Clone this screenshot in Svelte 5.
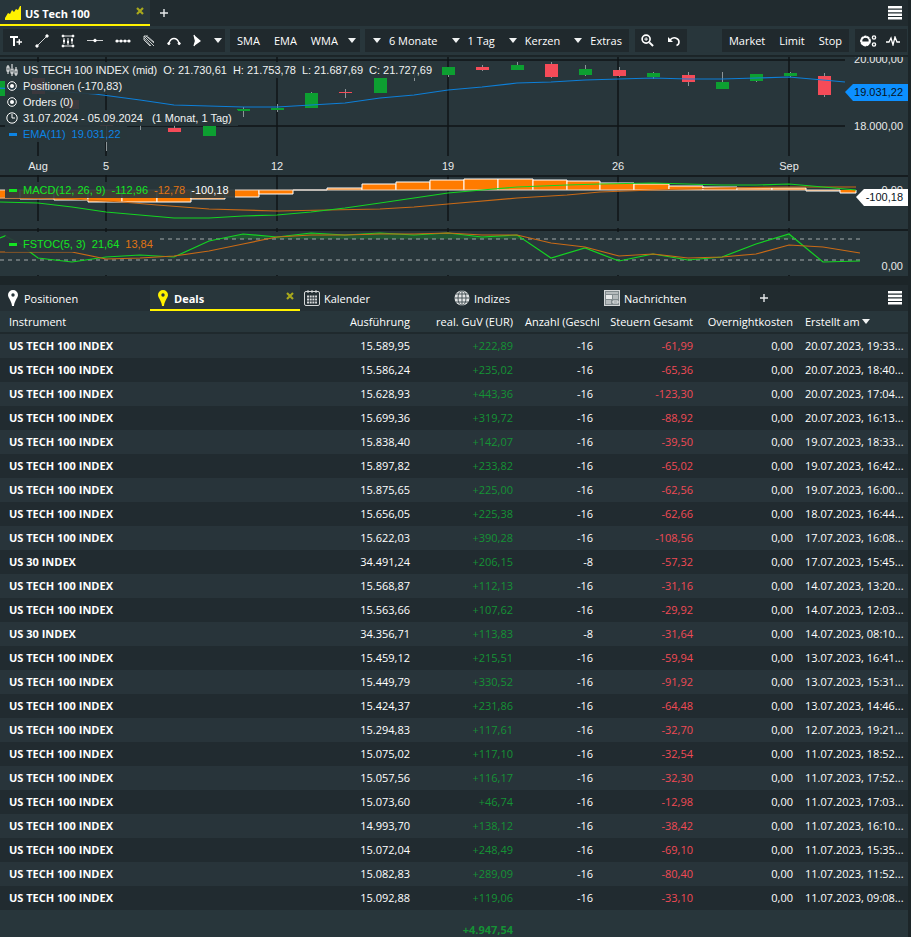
<script lang="ts">
  type Deal = [string, string, string, string, string, string];

  const us = 'US TECH 100 INDEX';
  const dow = 'US 30 INDEX';

  // instrument, price, profit, amount, tax, created
  const deals: Deal[] = [
    [us, '15.589,95', '+222,89', '-16', '-61,99', '20.07.2023, 19:33...'],
    [us, '15.586,24', '+235,02', '-16', '-65,36', '20.07.2023, 18:40...'],
    [us, '15.628,93', '+443,36', '-16', '-123,30', '20.07.2023, 17:04...'],
    [us, '15.699,36', '+319,72', '-16', '-88,92', '20.07.2023, 16:13...'],
    [us, '15.838,40', '+142,07', '-16', '-39,50', '19.07.2023, 18:33...'],
    [us, '15.897,82', '+233,82', '-16', '-65,02', '19.07.2023, 16:42...'],
    [us, '15.875,65', '+225,00', '-16', '-62,56', '19.07.2023, 16:00...'],
    [us, '15.656,05', '+225,38', '-16', '-62,66', '18.07.2023, 16:44...'],
    [us, '15.622,03', '+390,28', '-16', '-108,56', '17.07.2023, 16:08...'],
    [dow, '34.491,24', '+206,15', '-8', '-57,32', '17.07.2023, 15:45...'],
    [us, '15.568,87', '+112,13', '-16', '-31,16', '14.07.2023, 13:20...'],
    [us, '15.563,66', '+107,62', '-16', '-29,92', '14.07.2023, 12:03...'],
    [dow, '34.356,71', '+113,83', '-8', '-31,64', '14.07.2023, 08:10...'],
    [us, '15.459,12', '+215,51', '-16', '-59,94', '13.07.2023, 16:41...'],
    [us, '15.449,79', '+330,52', '-16', '-91,92', '13.07.2023, 15:31...'],
    [us, '15.424,37', '+231,86', '-16', '-64,48', '13.07.2023, 14:46...'],
    [us, '15.294,83', '+117,61', '-16', '-32,70', '12.07.2023, 19:21...'],
    [us, '15.075,02', '+117,10', '-16', '-32,54', '11.07.2023, 18:52...'],
    [us, '15.057,56', '+116,17', '-16', '-32,30', '11.07.2023, 17:52...'],
    [us, '15.073,60', '+46,74', '-16', '-12,98', '11.07.2023, 17:03...'],
    [us, '14.993,70', '+138,12', '-16', '-38,42', '11.07.2023, 16:10...'],
    [us, '15.072,04', '+248,49', '-16', '-69,10', '11.07.2023, 15:35...'],
    [us, '15.082,83', '+289,09', '-16', '-80,40', '11.07.2023, 11:52...'],
    [us, '15.092,88', '+119,06', '-16', '-33,10', '11.07.2023, 09:08...']
  ];

  const days = [
    { x: 38, label: 'Aug' },
    { x: 106, label: '5' },
    { x: 277, label: '12' },
    { x: 448, label: '19' },
    { x: 618, label: '26' },
    { x: 789, label: 'Sep' }
  ];

  // x, body top, body bottom, wick top, wick bottom, rising
  const candles: [number, number, number, number, number, boolean][] = [
    [-2, 81, 96, 79, 96, true],
    [38, 78, 94, 78, 94, false],
    [72, 100, 109, 100, 109, false],
    [106, 125, 126, 125, 151, false],
    [174, 128, 132, 125, 132, false],
    [209, 126, 136, 126, 136, true],
    [243, 109, 111, 107, 117, true],
    [277, 108, 110, 104, 112, true],
    [311, 93, 108, 92, 108, true],
    [345, 92, 93, 89, 98, false],
    [380, 78, 93, 78, 93, true],
    [448, 67, 75, 67, 77, true],
    [482, 67, 70, 65, 71, false],
    [517, 65, 70, 62, 70, true],
    [551, 64, 77, 62, 78, false],
    [585, 69, 75, 65, 76, true],
    [619, 70, 76, 67, 77, false],
    [653, 73, 77, 72, 79, true],
    [688, 75, 82, 72, 86, false],
    [722, 82, 89, 72, 89, true],
    [756, 74, 81, 74, 82, true],
    [790, 73, 76, 72, 77, true],
    [824, 76, 95, 73, 97, false]
  ];

  // x, width, value edge; the zero line is at 190
  const bars: [number, number, number][] = [
    [-14, 34, 198], [20, 34, 199], [54, 34, 200], [88, 34, 202], [122, 35, 202],
    [157, 34, 202], [191, 34, 199], [225, 34, 197], [259, 34, 194], [293, 34, 190],
    [327, 35, 188], [362, 34, 184], [396, 34, 182], [430, 34, 180], [464, 34, 179],
    [498, 35, 179], [533, 34, 180], [567, 33, 181], [600, 34, 183], [634, 35, 184],
    [669, 34, 186], [703, 34, 187], [737, 35, 188], [772, 34, 188], [806, 34, 191],
    [840, 16, 193]
  ];

  const ema = '-2,88 38,90 95,94 140,100 174,105 243,107 277,107 311,105 345,103 380,98 414,95 448,90 482,87 517,83 551,82 585,80 619,79 653,78 688,79 722,79 756,78 789,77 823,80 845,82';
  const macd = '0,202 38,203 72,207 106,212 140,215 174,218 209,218 243,216 277,215 311,212 345,208 380,203 414,198 448,193 482,190 517,187 567,185 600,184 653,183 721,185 756,185 789,184 823,187 856,190';
  const signal = '0,198 72,199 122,202 157,205 209,209 277,211 327,210 380,209 414,207 448,204 517,198 567,195 600,192 653,190 721,188 789,187 856,187';
  const fast = '0,238 5,236 24,246 30,252 38,258 72,262 106,257 140,255 174,257 209,241 243,234 277,237 311,233 345,235 380,233 414,235 448,233 482,237 517,235 551,258 585,248 619,261 653,254 688,260 722,257 756,244 789,234 823,262 860,261';
  const slow = '0,252 72,252 106,259 140,258 174,256 209,251 243,244 277,237 311,235 345,235 380,234 414,234 448,233 482,235 517,235 551,243 585,247 619,256 653,254 688,258 722,257 756,254 789,245 823,247 860,253';
</script>

{#snippet burger()}
  <svg width="14" height="14" viewBox="0 0 14 14" fill="#fff"><path d="M0 0h14v2.500H0zM0 3.700h14v2.500H0zM0 7.400h14v2.500H0zM0 11.100h14v2.500H0z" /></svg>
{/snippet}

{#snippet caret()}
  <svg class="caret" width="8" height="5" viewBox="0 0 8 5"><path d="M0 0h8L4 5z" fill="#f0f2f2" /></svg>
{/snippet}

{#snippet cross()}
  <svg width="8" height="8" viewBox="0 0 8 8"><path d="M1 1l6 6M7 1L1 7" stroke="#a8a81c" stroke-width="2.200" /></svg>
{/snippet}

{#snippet plus()}
  <svg width="8" height="8" viewBox="0 0 8 8"><path d="M4 0v8M0 4h8" stroke="#e6e9ea" stroke-width="1.400" /></svg>
{/snippet}

{#snippet pin(color: string)}
  <svg width="10" height="16" viewBox="0 0 10 16"><path d="M5 0a5 5 0 0 0-5 5c0 3 3.600 5.500 4 11h2c.4-5.500 4-8 4-11a5 5 0 0 0-5-5z" fill={color} /><circle cx="5" cy="5" r="1.700" fill="#28363b" /></svg>
{/snippet}

<div class="app">
  <nav class="tabs">
    <button class="tab active">
      <svg class="logo" width="16" height="14" viewBox="0 0 16 14"><path d="M0 14v-2l3-5 2 1 2-4 2 2 2-3 2 1 2-4h1v14z" fill="#fff200" /></svg>
      <span class="name">US Tech 100</span>
      {@render cross()}
    </button>
    <button class="add" aria-label="Neuer Tab">{@render plus()}</button>
    <button class="menu" aria-label="Menü">{@render burger()}</button>
  </nav>

  <div class="toolbar">
    <div class="group tools">
      <button aria-label="Text"><svg width="14" height="14" viewBox="0 0 14 14" fill="none" stroke="#fff"><path d="M1 3h8M5 3v9" stroke-width="2" /><path d="M7.500 8h5.500M10.300 5.200v5.600" stroke-width="1.400" /></svg></button>
      <button aria-label="Linie"><svg width="14" height="14" viewBox="0 0 14 14" fill="#fff" stroke="#fff"><path d="M2 12L12 2" stroke-width=".8" /><circle cx="2" cy="12" r="1.200" /><circle cx="12" cy="2" r="1.200" /></svg></button>
      <button aria-label="Bereich"><svg width="14" height="14" viewBox="0 0 14 14" fill="#fff" stroke="#fff" stroke-width=".9"><path d="M1 2h12M1 12h12M3 4v6M7 4v7M11 4v6" /><circle cx="2" cy="2" r="1" /><circle cx="12" cy="2" r="1" /><circle cx="2" cy="12" r="1" /><circle cx="12" cy="12" r="1" /><path d="M2.500 6h1v2h-1zM6.500 7h1v2h-1zM10.500 5h1v2h-1z" /></svg></button>
      <button aria-label="Horizontale"><svg width="16" height="14" viewBox="0 0 16 14" fill="#fff" stroke="#fff"><path d="M0 6.500h16" stroke-width=".8" /><circle cx="8" cy="6.500" r="1.300" /></svg></button>
      <button aria-label="Strecke"><svg width="16" height="14" viewBox="0 0 16 14" fill="#fff"><path d="M1 7h14" stroke="#fff" stroke-width=".8" /><circle cx="2" cy="7" r="1.600" /><circle cx="6" cy="7" r="1.500" /><circle cx="10" cy="7" r="1.500" /><circle cx="14" cy="7" r="1.600" /></svg></button>
      <button aria-label="Fibonacci"><svg width="12" height="12" viewBox="0 0 12 12" fill="none" stroke="#d8dcdd"><path d="M1 1l10 10M3 1l8 7M1 3l7 8M5 2l6 5M1 1h4M1 1v4l6 6" stroke-width=".9" /></svg></button>
      <button aria-label="Bogen"><svg width="14" height="14" viewBox="0 0 14 14" fill="#fff" stroke="#fff"><path d="M2 9C4 3 10 3 12 9" fill="none" stroke-width="1.400" /><circle cx="1.800" cy="9.500" r="1.100" /><circle cx="12.200" cy="9.500" r="1.100" /></svg></button>
      <button aria-label="Muster"><svg width="9" height="13" viewBox="0 0 9 13"><path d="M1 1l7 6-7 5 1.500-5z" fill="#fff" /><path d="M1 1l1.500 6L1 12" fill="none" stroke="#fff" stroke-width="1.200" /></svg></button>
      <button aria-label="Mehr Werkzeuge">{@render caret()}</button>
    </div>
    <div class="group averages">
      <button>SMA</button>
      <button>EMA</button>
      <button>WMA</button>
      <button aria-label="Mehr Indikatoren">{@render caret()}</button>
    </div>
    <div class="group ranges">
      <button>{@render caret()}6 Monate</button>
      <button>{@render caret()}1 Tag</button>
      <button>{@render caret()}Kerzen</button>
      <button>{@render caret()}Extras</button>
    </div>
    <div class="group zoom">
      <button aria-label="Zoom"><svg width="13" height="13" viewBox="0 0 14 14" fill="none" stroke="#fff"><circle cx="5.500" cy="5.500" r="4.300" stroke-width="1.800" /><path d="M9 9l4 4" stroke-width="2.200" /><path d="M3.500 5.500h4M5.500 3.500v4" /></svg></button>
      <button aria-label="Zurücksetzen"><svg width="12" height="12" viewBox="0 0 12 12"><path d="M2 5c3-4 9-2 9 2 0 2-1 3-2.500 3.500" fill="none" stroke="#fff" stroke-width="1.600" /><path d="M0 2v5h5z" fill="#fff" /></svg></button>
    </div>
    <div class="group orders">
      <button>Market</button>
      <button>Limit</button>
      <button>Stop</button>
    </div>
    <div class="group settings">
      <button aria-label="Einstellungen"><svg width="17" height="14" viewBox="0 0 17 14" fill="none" stroke="#fff"><circle cx="5.500" cy="7" r="4.400" stroke-width="2" stroke-dasharray="2.600 .5" /><circle cx="5.500" cy="7" r="4" stroke-width="1.400" /><path d="M2 8h7l-1 3H3z" fill="#fff" /><circle cx="14" cy="3.500" r="1.600" stroke-width="1.400" /><circle cx="14" cy="10.500" r="1.600" stroke-width="1.400" /></svg></button>
      <button aria-label="Aktivität"><svg width="14" height="10" viewBox="0 0 14 10"><path d="M0 6h3l2-4 2 7 2-8 2 5h3" fill="none" stroke="#fff" stroke-width="1.300" /></svg></button>
    </div>
  </div>

  <section class="chart">
    <svg class="plot" viewBox="0 57 908 219">
      <g class="grid">
        {#each days as d}
          <path d="M{d.x} 57V156M{d.x} 175V221M{d.x} 228V232M{d.x} 275V276" />
        {/each}
        <path d="M0 60H845M0 126H845" />
        <path d="M0 176H908M0 230H908" />
      </g>

      {#each candles as [x, top, bottom, high, low, up]}
        <path class="wick" d="M{x + 0.5} {high}V{low}" />
        <rect x={x - 6} y={top} width="13" height={bottom - top} fill={up ? '#0d9f31' : '#f54b58'} />
      {/each}
      <path class="wick" d="M414.500 72V81M140.500 125V130" />
      <polyline points={ema} stroke="#0d7fd8" />

      {#each bars as [x, w, edge]}
        <rect x={x} y={Math.min(190, edge)} width={w} height={Math.abs(edge - 190)} fill="#ff7b00" />
        <path class="step" d="M{x} 190V{edge}H{x + w}V190" />
      {/each}
      <path d="M0 190H840" stroke="#e8d9cc" />
      <polyline points={signal} stroke="#c96a16" />
      <polyline points={macd} stroke="#14d422" />

      <clipPath id="overbought"><rect x="160" y="231" width="700" height="8" /></clipPath>
      <path d="M160,239 L{fast} L860,239z" fill="#14a41f" opacity=".3" clip-path="url(#overbought)" />
      <path class="limit" d="M160 239H860M0 260H860" />
      <polyline points={fast} stroke="#14d422" />
      <polyline points={slow} stroke="#c96a16" />

      <g class="axis">
        {#each days as d}
          <text x={d.x} y="170" text-anchor="middle">{d.label}</text>
        {/each}
        <text x="903" y="63" text-anchor="end">20.000,00</text>
        <text x="903" y="130" text-anchor="end">18.000,00</text>
        <text x="903" y="194" text-anchor="end">0,00</text>
        <text x="903" y="270" text-anchor="end">0,00</text>
        <path d="M845 92L853 84H908V101H853z" fill="#0d90ff" />
        <text class="dark" x="903" y="96" text-anchor="end">19.031,22</text>
        <path d="M856 197L864 189H908V206H864z" fill="#fff" />
        <text class="dark" x="903" y="201" text-anchor="end">-100,18</text>
      </g>
    </svg>

    <div class="legend price">
      <p>
        <svg width="12" height="12" viewBox="0 0 12 12" fill="none" stroke="#fff"><path d="M2 1v2M2 7v3M6 0v4M6 9v3M10 3v3M10 10v2" /><rect x="1" y="3" width="2" height="4" /><rect x="5" y="5" width="2" height="4" /><rect x="9" y="6" width="2" height="4" /></svg>
        <span>US TECH 100 INDEX (mid)</span><span>O: 21.730,61</span><span>H: 21.753,78</span><span>L: 21.687,69</span><span>C: 21.727,69</span>
      </p>
      {#each ['Positionen (-170,83)', 'Orders (0)'] as label}
        <p>
          <svg width="12" height="12" viewBox="0 0 12 12"><circle cx="6" cy="6" r="4.300" fill="none" stroke="#fff" /><circle cx="6" cy="6" r="2" fill="#fff" /></svg>
          <span>{label}</span>
        </p>
      {/each}
      <p>
        <svg width="12" height="12" viewBox="0 0 12 12" fill="none" stroke="#fff"><circle cx="6" cy="6" r="5.200" /><path d="M6 2v4h3" /></svg>
        <span>31.07.2024 - 05.09.2024</span><span class="wide">(1 Monat, 1 Tag)</span>
      </p>
      <p class="blue"><i></i><span>EMA(11)</span><span>19.031,22</span></p>
    </div>
    <div class="legend macd">
      <p class="green"><i></i><span>MACD(12, 26, 9)</span><span>-112,96</span><span class="orange">-12,78</span><span class="white">-100,18</span></p>
    </div>
    <div class="legend stoc">
      <p class="green"><i></i><span>FSTOC(5, 3)</span><span>21,64</span><span class="orange">13,84</span></p>
    </div>
  </section>

  <nav class="tabs lower">
    <button class="tab">{@render pin('#fff')}<span class="name">Positionen</span></button>
    <button class="tab active">{@render pin('#fff200')}<span class="name">Deals</span>{@render cross()}</button>
    <button class="tab icon">
      <svg width="16" height="16" viewBox="0 0 16 16" fill="none" stroke="#d5d8d9"><rect x=".5" y="1.500" width="15" height="14" rx="1.500" /><path d="M4 0v3M8 0v3M12 0v3" /><path d="M3 6.500h10M3 9.500h10M3 12.500h10" stroke-width="2" stroke-dasharray="2 .7" /></svg>
      <span class="name">Kalender</span>
    </button>
    <button class="tab icon">
      <svg width="16" height="16" viewBox="0 0 16 16"><circle cx="8" cy="8" r="7.500" fill="#e4e6e7" /><path d="M8 0v16M0 8h16M1.500 4h13M1.500 12h13" stroke="#4b565a" fill="none" /><ellipse cx="8" cy="8" rx="4" ry="7.500" fill="none" stroke="#4b565a" /></svg>
      <span class="name">Indizes</span>
    </button>
    <button class="tab icon">
      <svg width="16" height="16" viewBox="0 0 16 16"><rect x=".5" y=".5" width="15" height="15" fill="#828b8e" stroke="#d5d8d9" /><path d="M2 3h12M9 6h5M9 8h5M2 11h5M2 13h5M9 11h5v2H9z" stroke="#e8eaea" fill="none" /><path d="M2 5h6v4H2z" fill="#e8eaea" /></svg>
      <span class="name">Nachrichten</span>
    </button>
    <button class="add" aria-label="Neuer Tab">{@render plus()}</button>
    <button class="menu" aria-label="Menü">{@render burger()}</button>
  </nav>

  <table>
    <colgroup>
      <col /><col class="c-price" /><col class="c-profit" /><col class="c-count" /><col class="c-tax" /><col class="c-tax" /><col class="c-date" />
    </colgroup>
    <thead>
      <tr>
        <th class="left">Instrument</th>
        <th>Ausführung</th>
        <th>real. GuV (EUR)</th>
        <th class="cut">Anzahl (Geschl</th>
        <th>Steuern Gesamt</th>
        <th>Overnightkosten</th>
        <th class="date">Erstellt am {@render caret()}</th>
      </tr>
    </thead>
    <tbody>
      {#each deals as [name, price, profit, count, tax, created]}
        <tr>
          <td class="left">{name}</td>
          <td>{price}</td>
          <td class="gain">{profit}</td>
          <td>{count}</td>
          <td class="loss">{tax}</td>
          <td>0,00</td>
          <td class="date">{created}</td>
        </tr>
      {/each}
    </tbody>
    <tfoot>
      <tr>
        <td></td><td></td>
        <td class="gain">+4.947,54</td>
        <td></td><td></td><td></td><td></td>
      </tr>
    </tfoot>
  </table>
</div>

<style>
  :global(body) { margin: 0; background: #1c2528; }

  .app {
    min-height: 100vh; box-sizing: border-box; padding-right: 3px; background: #1c2528;
    color: #fff; font: 11px/14px "Open Sans", "Noto Sans", sans-serif;
  }

  svg { display: block; flex: none; }
  button { display: flex; align-items: center; margin: 0; padding: 0; border: 0; background: none; color: inherit; font: inherit; white-space: nowrap; cursor: pointer; }

  .tabs { display: flex; height: 26px; background: #212b2f; }
  .tab { box-sizing: border-box; flex: 0 1 150px; gap: 4px; padding: 2px 5px 0; border-bottom: 2px solid transparent; text-align: left; }
  .tab .name { flex: 1; padding-top: 2px; }
  .tab.active { background: #28363b; border-color: #fff200; font-weight: 700; }
  .tab.active svg:last-child { align-self: flex-start; margin: 5px 1px 0; }
  .add { width: 28px; justify-content: center; }
  .menu { margin-left: auto; padding: 0 6px; }

  .toolbar { display: flex; height: 30px; box-sizing: border-box; padding: 3px 1px 3px 3px; background: #28363b; border-bottom: 1px solid #1b2427; }
  .group { display: flex; align-items: center; background: #20292d; }
  .tools { width: 222px; padding: 0 3px 0 6px; box-sizing: border-box; justify-content: space-between; }
  .averages { gap: 14px; margin-left: 5px; padding: 0 4px 0 7px; }
  .averages .caret { margin-left: -4px; }
  .ranges { gap: 14px; margin-left: 5px; padding: 0 7px 0 8px; }
  .ranges button { gap: 8px; }
  .zoom { gap: 14px; margin-left: 6px; padding: 0 7px 0 6px; }
  .orders { gap: 14px; margin-left: auto; padding: 0 7px; }
  .settings { gap: 9px; margin-left: 6px; padding: 0 7px 0 5px; }

  .chart { position: relative; margin-top: 1px; background: #28363b; font: 11px/16px "Liberation Sans", Arial, sans-serif; }
  .plot { width: 100%; height: auto; }
  .plot polyline { fill: none; stroke-width: 1.2; }
  .grid path { stroke: #0f1517; stroke-width: 1.5; fill: none; }
  .wick { stroke: #8d9598; }
  .step { fill: none; stroke: #fff; }
  .limit { stroke: #a3aaac; stroke-dasharray: 4 4; }
  .axis text { fill: #e8eaea; }
  .axis .dark { fill: #07131c; }

  .legend { position: absolute; left: 5px; color: #f0f2f2; white-space: nowrap; }
  .legend.price { top: 5px; }
  .legend.macd { top: 125px; }
  .legend.stoc { top: 179px; }
  .legend p { display: flex; align-items: center; width: max-content; height: 16px; margin: 0; padding-right: 6px; background: rgba(40, 54, 59, .9); }
  .legend svg, .legend i { margin-right: 5px; margin-left: 1px; }
  .legend i { width: 8px; height: 3px; margin-left: 4px; margin-right: 6px; background: currentColor; }
  .legend span + span { margin-left: 6px; }
  .legend .wide { margin-left: 9px; }
  .legend .blue { color: #0d84e3; }
  .legend .green { color: #14e622; }
  .legend .orange { color: #e07414; }
  .legend .white { color: #fff; }

  .lower { margin-top: 9px; background: #212b2f; }
  .lower .tab { background: #242f34; gap: 6px; padding-left: 8px; }
  .lower .tab.active { background: #28363b; }
  .lower .tab.icon { gap: 4px; padding-left: 4px; }

  table { width: 100%; table-layout: fixed; border-collapse: separate; border-spacing: 0; background: #28363b; }
  .c-price, .c-profit { width: 103px; }
  .c-count { width: 80px; }
  .c-tax { width: 100px; }
  .c-date { width: 109px; }
  th, td { height: 24px; padding: 0 6px; box-sizing: border-box; text-align: right; font-weight: 400; white-space: nowrap; }
  th { height: 23px; border-bottom: 2px solid #1f292d; }
  th .caret { display: inline-block; vertical-align: 2px; }
  .left { padding-left: 9px; text-align: left; }
  td.left { font-weight: 700; }
  .cut { padding-right: 0; text-align: left; overflow: hidden; }
  .date { text-align: left; padding-right: 4px; }
  tbody tr:nth-child(odd) { background: #28343a; }
  tbody tr:nth-child(even) { background: #212b30; }
  .gain { color: #159235; }
  .loss { color: #f04a55; }
  tfoot td { height: 27px; padding-top: 12px; }
  tfoot .gain { font-weight: 700; }
</style>
